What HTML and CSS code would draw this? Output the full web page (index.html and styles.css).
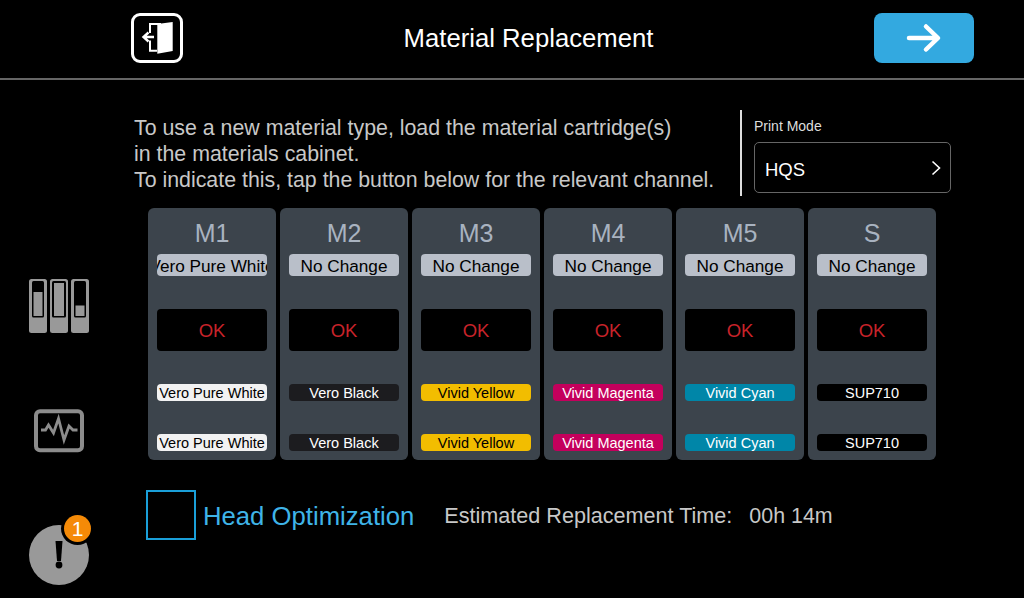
FILE: index.html
```html
<!DOCTYPE html>
<html lang="en">
<head>
  <meta charset="UTF-8" />
  <title>Material Replacement</title>
  <link rel="stylesheet" href="styles.css">
</head>
<body>
  <header class="topbar">
    <button class="exit-btn">
      <svg width="46" height="44" viewBox="3 3 46 44">
        <polygon points="26.3,11 41.7,9 41.7,38 26.3,40.7" fill="#fff"/>
        <path d="M30 11H19V20M19 27.5V37.7H26" fill="none" stroke="#fff" stroke-width="2"/>
        <path d="M13 24H23M17.5 19.5L12.5 24L17.5 28.5" fill="none" stroke="#fff" stroke-width="2.4"/>
      </svg>
    </button>
    <h1 class="title">Material Replacement</h1>
    <button class="next-btn">
      <svg width="100" height="50" viewBox="0 0 100 50">
        <path d="M35 25H63.5M52 13.5L64 25L52 36.5" fill="none" stroke="#fff" stroke-width="4.5" stroke-linecap="round" stroke-linejoin="round"/>
      </svg>
    </button>
  </header>

  <div class="layout">
    <aside class="sidebar">
      <svg class="side-materials" width="60" height="54" viewBox="0 0 60 54">
        <rect x="0" y="0" width="18" height="54" rx="2.5" fill="#999"/>
        <rect x="21" y="0" width="18" height="54" rx="2.5" fill="#999"/>
        <rect x="42" y="0" width="18" height="54" rx="2.5" fill="#999"/>
        <rect x="3" y="2" width="12" height="36.5" rx="1.5" fill="#000"/>
        <rect x="23" y="2" width="14" height="36.5" rx="1.5" fill="#000"/>
        <rect x="45" y="2" width="12" height="36.5" rx="1.5" fill="#000"/>
        <rect x="4.5" y="13" width="9" height="24" fill="#999"/>
        <rect x="25" y="4" width="10" height="33" fill="#999"/>
        <rect x="46.5" y="26.5" width="9" height="10.5" fill="#999"/>
      </svg>
      <svg class="side-monitor" width="52" height="44" viewBox="0 0 52 44">
        <rect x="3" y="2.3" width="46" height="39" rx="4" fill="none" stroke="#8c8c8c" stroke-width="4"/>
        <polyline points="8,21 12.5,21 15.5,16 20.5,24 25.5,9.5 31,31 36,17 40,21 44.5,21" fill="none" stroke="#8c8c8c" stroke-width="2.8"/>
      </svg>
      <div class="side-alert">
        <svg width="60" height="60" viewBox="0 0 60 60">
          <circle cx="30" cy="30" r="30" fill="#999"/>
          <polygon points="26.5,16 33.5,16 32,36 28,36" fill="#000"/>
          <circle cx="30" cy="40" r="3.4" fill="#000"/>
        </svg>
        <span class="badge">1</span>
      </div>
    </aside>

    <main class="content">
      <section class="intro">
        <p class="intro-text">To use a new material type, load the material cartridge(s)<br>in the materials cabinet.<br>To indicate this, tap the button below for the relevant channel.</p>
        <div class="print-mode">
          <label class="mode-label">Print Mode</label>
          <div class="mode-select">
            <span>HQS</span>
            <svg width="10" height="16" viewBox="0 0 10 16"><path d="M1.5 1.5L8.5 8L1.5 14.5" fill="none" stroke="#fff" stroke-width="1.6"/></svg>
          </div>
        </div>
      </section>

      <section class="channels">
        <div class="channel">
          <div class="channel-name">M1</div>
          <div class="choice"><span>Vero Pure White</span></div>
          <div class="status">OK</div>
          <div class="chip chip-white">Vero Pure White</div>
          <div class="chip chip-white">Vero Pure White</div>
        </div>
        <div class="channel">
          <div class="channel-name">M2</div>
          <div class="choice"><span>No Change</span></div>
          <div class="status">OK</div>
          <div class="chip chip-black">Vero Black</div>
          <div class="chip chip-black">Vero Black</div>
        </div>
        <div class="channel">
          <div class="channel-name">M3</div>
          <div class="choice"><span>No Change</span></div>
          <div class="status">OK</div>
          <div class="chip chip-yellow">Vivid Yellow</div>
          <div class="chip chip-yellow">Vivid Yellow</div>
        </div>
        <div class="channel">
          <div class="channel-name">M4</div>
          <div class="choice"><span>No Change</span></div>
          <div class="status">OK</div>
          <div class="chip chip-magenta">Vivid Magenta</div>
          <div class="chip chip-magenta">Vivid Magenta</div>
        </div>
        <div class="channel">
          <div class="channel-name">M5</div>
          <div class="choice"><span>No Change</span></div>
          <div class="status">OK</div>
          <div class="chip chip-cyan">Vivid Cyan</div>
          <div class="chip chip-cyan">Vivid Cyan</div>
        </div>
        <div class="channel">
          <div class="channel-name">S</div>
          <div class="choice"><span>No Change</span></div>
          <div class="status">OK</div>
          <div class="chip chip-sup">SUP710</div>
          <div class="chip chip-sup">SUP710</div>
        </div>
      </section>

      <section class="options">
        <div class="checkbox"></div>
        <span class="option-label">Head Optimization</span>
        <span class="time-label">Estimated Replacement Time:</span>
        <span class="time-value">00h 14m</span>
      </section>
    </main>
  </div>
</body>
</html>
```

FILE: styles.css
```css
html, body {
  margin: 0;
  height: 598px;
  overflow: hidden;
}
body {
  font-family: "Liberation Sans", Arial, sans-serif;
  background-color: #000;
  color: #fff;
}
button {
  border: none;
  padding: 0;
  cursor: pointer;
}
.topbar {
  height: 78px;
  border-bottom: 2px solid #666;
  display: flex;
  align-items: center;
  padding: 0 50px 0 131px;
  box-sizing: content-box;
}
.topbar svg {
  display: block;
}
.exit-btn {
  width: 52px;
  height: 50px;
  box-sizing: border-box;
  background: #000;
  border: 3px solid #fff;
  border-radius: 9px;
  margin-top: -3px;
}
.title {
  flex: 1;
  margin: -1px 0 0 0;
  text-align: center;
  font-size: 25.7px;
  font-weight: normal;
}
.next-btn {
  width: 100px;
  height: 50px;
  background: #33a9e0;
  border-radius: 8px;
  margin-top: -3px;
}
.layout {
  display: flex;
}
.sidebar {
  width: 118px;
  display: flex;
  flex-direction: column;
  align-items: center;
  padding-top: 199px;
}
.side-monitor {
  margin-top: 76px;
}
.side-alert {
  position: relative;
  width: 60px;
  height: 60px;
  margin-top: 72px;
}
.badge {
  position: absolute;
  top: -10px;
  left: 35px;
  width: 27px;
  height: 27px;
  line-height: 27px;
  text-align: center;
  font-size: 21px;
  background: #f58a07;
  border-radius: 50%;
  box-shadow: 0 0 0 3px #000;
}
.content {
  flex: 1;
  padding-top: 30px;
}
.intro {
  display: flex;
  height: 86px;
}
.intro-text {
  width: 622px;
  margin: 0;
  padding: 5px 0 0 16px;
  box-sizing: border-box;
  font-size: 21.35px;
  line-height: 26px;
  color: #c8c8c8;
}
.print-mode {
  border-left: 2px solid #ddd;
  padding-left: 12px;
}
.mode-label {
  display: block;
  font-size: 14px;
  line-height: 16px;
  margin-top: 8px;
  color: #ddd;
}
.mode-select {
  width: 197px;
  height: 51px;
  margin-top: 8px;
  box-sizing: border-box;
  border: 1px solid #666;
  border-radius: 5px;
  display: flex;
  align-items: center;
  justify-content: space-between;
  padding: 5px 9px 0 10px;
  font-size: 18.5px;
}
.mode-select svg {
  margin-top: -5px;
}
.channels {
  display: flex;
  gap: 4px;
  margin: 12px 0 0 30px;
}
.channel {
  width: 128px;
  height: 252px;
  box-sizing: border-box;
  background: #3c444c;
  border-radius: 6px;
  padding: 0 9px;
  display: flex;
  flex-direction: column;
}
.channel-name {
  height: 46px;
  line-height: 50px;
  text-align: center;
  font-size: 25px;
  color: #a9b3c0;
}
.choice {
  height: 22px;
  background: #b9bfc9;
  border-radius: 4px;
  color: #000;
  font-size: 17.2px;
  line-height: 25px;
  white-space: nowrap;
  overflow: hidden;
  display: flex;
  justify-content: center;
}
.status {
  height: 42px;
  margin-top: 33px;
  line-height: 44px;
  background: #000;
  border-radius: 4px;
  text-align: center;
  font-size: 18.5px;
  color: #c8232a;
}
.chip {
  height: 17px;
  margin-top: 33px;
  line-height: 18px;
  border-radius: 4px;
  text-align: center;
  font-size: 14.5px;
  white-space: nowrap;
}
.chip + .chip {
  margin-top: 33px;
}
.chip-white {
  background: #f2f2f2;
  color: #000;
}
.chip-black {
  background: #1c1c1f;
}
.chip-yellow {
  background: #f2bd00;
  color: #000;
}
.chip-magenta {
  background: #c4005c;
}
.chip-cyan {
  background: #0086a8;
}
.chip-sup {
  background: #000;
}
.options {
  display: flex;
  align-items: center;
  margin: 30px 0 0 28px;
}
.checkbox {
  width: 50px;
  height: 50px;
  box-sizing: border-box;
  border: 2px solid #1a9fd9;
}
.option-label {
  margin-left: 7px;
  padding-top: 2px;
  font-size: 25.7px;
  color: #3fb4e8;
}
.time-label {
  margin-left: 30px;
  padding-top: 2px;
  font-size: 21.6px;
  color: #c8c8c8;
}
.time-value {
  margin-left: 17px;
  padding-top: 2px;
  font-size: 21.4px;
  color: #c8c8c8;
}
```
